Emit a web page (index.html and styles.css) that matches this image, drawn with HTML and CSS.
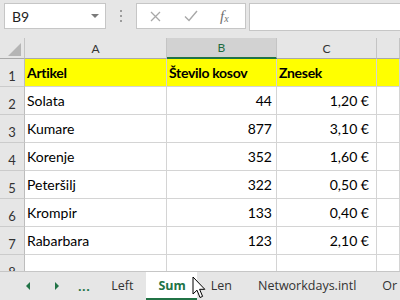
FILE: index.html
```html
<!DOCTYPE html>
<html lang="sl">
<head>
    <meta charset="UTF-8">
    <title>Zvezek1 - Excel</title>
    <link rel="stylesheet" href="styles.css">
</head>
<body>
    <div class="app">
        <div class="toolbar">
            <div class="namebox">
                <span>B9</span>
                <span class="caret"></span>
            </div>
            <div class="dots"><i></i><i></i><i></i></div>
            <div class="fbuttons">
                <svg class="icon-x" width="11" height="11" viewBox="0 0 11 11"><path d="M1 1L10 10M10 1L1 10" stroke="#a8a8a8" stroke-width="1.3" fill="none"/></svg>
                <svg class="icon-check" width="14" height="12" viewBox="0 0 14 12"><path d="M1 6.5L5 10.5L13 1" stroke="#a8a8a8" stroke-width="1.4" fill="none"/></svg>
                <span class="fx">f<sub>x</sub></span>
            </div>
            <div class="formula"></div>
        </div>

        <div class="sheet">
            <div class="row head">
                <div class="corner"><span class="tri"></span></div>
                <div class="ch">A</div>
                <div class="ch sel">B</div>
                <div class="ch">C</div>
                <div class="ch"></div>
            </div>
            <div class="row title">
                <div class="rh">1</div>
                <div class="c">Artikel</div>
                <div class="c">Število kosov</div>
                <div class="c">Znesek</div>
                <div class="c"></div>
            </div>
            <div class="row">
                <div class="rh">2</div>
                <div class="c">Solata</div>
                <div class="c num">44</div>
                <div class="c eur">1,20 €</div>
                <div class="c"></div>
            </div>
            <div class="row">
                <div class="rh">3</div>
                <div class="c">Kumare</div>
                <div class="c num">877</div>
                <div class="c eur">3,10 €</div>
                <div class="c"></div>
            </div>
            <div class="row">
                <div class="rh">4</div>
                <div class="c">Korenje</div>
                <div class="c num">352</div>
                <div class="c eur">1,60 €</div>
                <div class="c"></div>
            </div>
            <div class="row">
                <div class="rh">5</div>
                <div class="c">Peteršilj</div>
                <div class="c num">322</div>
                <div class="c eur">0,50 €</div>
                <div class="c"></div>
            </div>
            <div class="row">
                <div class="rh">6</div>
                <div class="c">Krompir</div>
                <div class="c num">133</div>
                <div class="c eur">0,40 €</div>
                <div class="c"></div>
            </div>
            <div class="row">
                <div class="rh">7</div>
                <div class="c">Rabarbara</div>
                <div class="c num">123</div>
                <div class="c eur">2,10 €</div>
                <div class="c"></div>
            </div>
            <div class="row">
                <div class="rh">8</div>
                <div class="c"></div>
                <div class="c"></div>
                <div class="c"></div>
                <div class="c"></div>
            </div>
        </div>

        <div class="tabs">
            <span class="nav prev"></span>
            <span class="nav next"></span>
            <span class="more">...</span>
            <span class="sep"></span>
            <span class="tab">Left</span>
            <span class="tab active">Sum</span>
            <span class="tab">Len</span>
            <span class="sep"></span>
            <span class="tab">Networkdays.intl</span>
            <span class="sep"></span>
            <span class="tab">Or</span>
        </div>

        <svg class="cursor" width="14" height="24" viewBox="0 0 14 24">
            <path d="M1 1L1 18L5 14.2L8 21.5L10.6 20.4L7.6 13.3L12.8 13.3Z" fill="#fff" stroke="#000" stroke-width="1" stroke-linejoin="round"/>
        </svg>
    </div>
</body>
</html>
```

FILE: styles.css
```css
body {
    margin: 0;
    font-family: 'Lato', 'Liberation Sans', sans-serif;
    background: #e6e6e6;
}
.app {
    position: relative;
    width: 400px;
    height: 300px;
    display: flex;
    flex-direction: column;
    overflow: hidden;
}
.toolbar {
    height: 38px;
    flex: none;
    display: flex;
    align-items: flex-start;
    padding: 3px 0 0 4px;
    box-sizing: border-box;
    background: #e6e6e6;
}
.namebox {
    width: 102px;
    height: 26px;
    box-sizing: border-box;
    background: white;
    border: 1px solid #c6c6c6;
    display: flex;
    align-items: center;
    justify-content: space-between;
    padding: 0 6px 0 7px;
    font-size: 14px;
    color: #222;
}
.caret {
    width: 0;
    height: 0;
    border-left: 4px solid transparent;
    border-right: 4px solid transparent;
    border-top: 4px solid #7a7a7a;
}
.dots {
    width: 30px;
    height: 26px;
    display: flex;
    flex-direction: column;
    align-items: center;
    justify-content: center;
    gap: 3px;
}
.dots i {
    width: 2px;
    height: 2px;
    background: #9c9c9c;
}
.fbuttons {
    width: 110px;
    height: 26px;
    box-sizing: border-box;
    background: white;
    border: 1px solid #c6c6c6;
    display: flex;
    align-items: center;
    padding-left: 13px;
}
.icon-x {
    margin-right: 23px;
}
.icon-check {
    margin-right: 22px;
}
.fx {
    font-family: 'Liberation Serif', serif;
    font-style: italic;
    font-size: 15px;
    color: #707070;
}
.fx sub {
    font-size: 10px;
    vertical-align: -1px;
}
.formula {
    flex: 1;
    margin-left: 3px;
    height: 26px;
    background: white;
    border: 1px solid #c6c6c6;
    border-right: none;
}

.sheet {
    height: 233px;
    flex: none;
    overflow: hidden;
    background: white;
}
.row {
    display: grid;
    grid-template-columns: 25px 142px 110px 100px 1fr;
    height: 28px;
}
.row > div {
    box-sizing: border-box;
    border-right: 1px solid #d4d4d4;
    border-bottom: 1px solid #d4d4d4;
}
.row.head {
    height: 21px;
    background: #e6e6e6;
}
.row.head > div {
    border-right-color: #c4c4c4;
    border-bottom: 1px solid #a9a9a9;
}
.corner {
    position: relative;
}
.tri {
    position: absolute;
    right: 3px;
    bottom: 2px;
    width: 0;
    height: 0;
    border-left: 13px solid transparent;
    border-bottom: 13px solid #b5b5b5;
}
.ch {
    display: flex;
    align-items: center;
    justify-content: center;
    font-size: 12px;
    color: #333;
}
.ch.sel {
    background: #d2d2d2;
    color: #1e6b41;
    border-bottom: 2px solid #217346 !important;
}
.rh {
    background: #e6e6e6;
    border-right-color: #bdbdbd !important;
    border-bottom-color: #cbcbcb !important;
    display: flex;
    align-items: flex-end;
    justify-content: center;
    padding-bottom: 1px;
    font-size: 13px;
    line-height: 17px;
    color: #333;
}
.c {
    display: flex;
    align-items: flex-end;
    padding: 0 4px 5px 2px;
    font-size: 14px;
    line-height: 17px;
    color: #000;
    white-space: nowrap;
}
.title .c {
    background: #ffff00;
    font-weight: bold;
    letter-spacing: -0.3px;
}
.num {
    justify-content: flex-end;
}
.eur {
    justify-content: flex-end;
    padding-right: 7px;
}

.tabs {
    flex: 1;
    display: flex;
    align-items: stretch;
    border-top: 1px solid #c6c6c6;
    background: #e6e6e6;
    font-family: 'Open Sans', 'Liberation Sans', sans-serif;
    font-size: 12.5px;
    color: #333;
}
.nav {
    width: 0;
    height: 0;
    align-self: center;
    border-top: 4px solid transparent;
    border-bottom: 4px solid transparent;
}
.prev {
    margin-left: 26px;
    border-right: 4px solid #217346;
}
.next {
    margin-left: 25px;
    border-left: 4px solid #217346;
}
.more {
    margin-left: 19px;
    align-self: center;
    font-weight: bold;
    color: #217346;
    letter-spacing: 0.5px;
}
.sep {
    width: 1px;
    margin: 4px 0 5px;
    background: #a6a6a6;
}
.more + .sep {
    margin-left: 8px;
}
.tab {
    display: flex;
    align-items: center;
    padding: 0 13px 2px;
}
.tab.active {
    background: white;
    color: #217346;
    font-weight: bold;
    padding: 0 11px 0 12px;
    border-bottom: 2px solid #217346;
}
.tab.active + .tab {
    padding-left: 14px;
}

.cursor {
    position: absolute;
    left: 192px;
    top: 276px;
}
```
